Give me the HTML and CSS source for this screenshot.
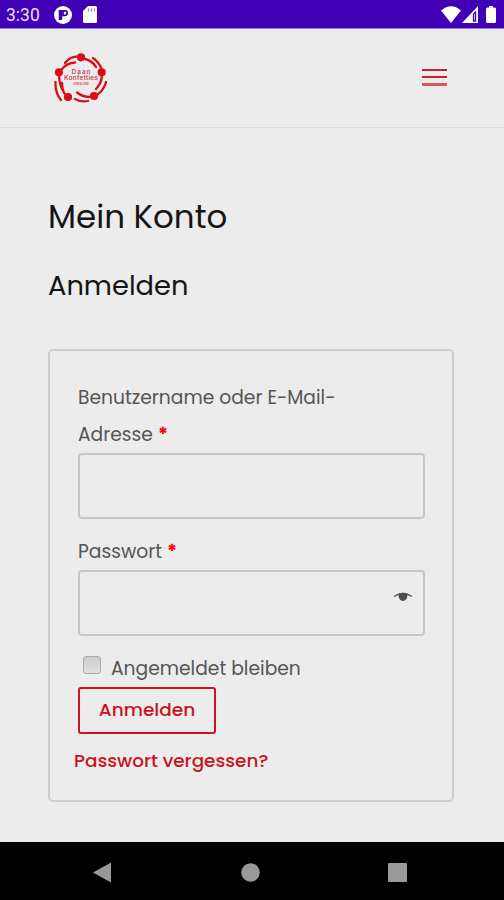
FILE: index.html
```html
<!DOCTYPE html>
<html lang="de">
<head>
<meta charset="utf-8">
<title>Mein Konto</title>
<link rel="stylesheet" href="styles.css">
</head>
<body>
<div class="status">
  <span class="time">3:30</span>
  <svg class="status-app" width="18" height="18" viewBox="0 0 18 18"><circle cx="9" cy="9" r="9" fill="#fff"/><path d="M6.500 4v10" fill="none" stroke="#4000b5" stroke-width="3.500"/><path d="M9 4.900h2a2.200 2.200 0 0 1 0 4.400H9z" fill="none" stroke="#4000b5" stroke-width="1.800"/></svg>
  <svg class="status-sd" width="14" height="17" viewBox="0 0 14 17"><path d="M5 0h7.500Q14 0 14 1.500v14Q14 17 12.500 17h-11Q0 17 0 15.500V5z" fill="#fff"/><path d="M5.500 2.500v3M8.500 2.500v3M11.500 2.500v3" stroke="#9a7ad8" stroke-width="1.300"/></svg>
  <svg class="status-wifi" width="20" height="17" viewBox="0 0 20 17"><path d="M0 4.500Q10-4 20 4.500L10 17z" fill="#fff"/></svg>
  <svg class="status-cell" width="16" height="17" viewBox="0 0 16 17"><path d="M0 17 16 0v17z" fill="#fff"/><path d="M11.500 8v7h2V6z" fill="none" stroke="#4000b5" stroke-width="1.300"/></svg>
  <svg class="status-battery" width="10" height="17" viewBox="0 0 10 17"><path d="M3 0h4v1.500h1.500Q10 1.500 10 3v12.500Q10 17 8.500 17h-7Q0 17 0 15.500V3Q0 1.500 1.500 1.500H3z" fill="#fff"/></svg>
</div>
<header class="header">
  <svg class="logo" width="54" height="52" viewBox="0 0 54 52">
    <g fill="#dc0d18"><circle cx="27" cy="5.300" r="4.100"/><circle cx="47.700" cy="20.300" r="4.100"/><circle cx="40" cy="44" r="4.100"/><circle cx="14" cy="45" r="4.100"/><circle cx="4.900" cy="20.300" r="4.100"/></g>
    <g fill="none" stroke="#dc0d18" stroke-width="2.300" stroke-linecap="round">
      <path d="M26 4.500Q16 4 11 11M21 10.500Q13 11 8 17M29 6.500Q38 8 42 15M39 6Q45 10 48 18M48 22Q48 31 42 37M52 30Q50 38 43 43M38 44.500Q30 46 23 40.500M34 49Q27 50.500 21 47M13 44Q6 38 5 24M7 48Q1 41 1.500 30M10 41Q8 37 8 31"/>
    </g>
    <g class="logo-text"><text x="27.500" y="21.500" font-size="6.500" letter-spacing="1">Daan</text><text x="27" y="28" font-size="6.500" textLength="34">Konfetties</text><text x="27" y="32.500" font-size="3" textLength="16">HAIR &amp; CARE</text></g>
  </svg>
  <div class="menu"><i></i><i></i><i></i></div>
</header>
<main class="content">
  <h1>Mein Konto</h1>
  <h2>Anmelden</h2>
  <form class="login">
    <label class="user-label">Benutzername oder E-Mail-<br>Adresse <b>*</b></label>
    <div class="field"></div>
    <label class="pass-label">Passwort <b>*</b></label>
    <div class="field pass">
      <svg width="20" height="10" viewBox="0 0 20 10"><path d="M1 4.500Q10-1.500 19 4.500" fill="none" stroke="#555" stroke-width="1.300"/><path d="M5.500 2Q10-.5 14.500 2 14.500 9 10 9T5.500 2z" fill="#4c4c4c"/></svg>
    </div>
    <div class="remember"><span class="check"></span>Angemeldet bleiben</div>
    <div class="button">Anmelden</div>
    <a class="lost">Passwort vergessen?</a>
  </form>
</main>
<nav class="nav">
  <svg width="19" height="21" viewBox="0 0 19 21"><path d="M0 10.500 18 .5v20z" fill="#999"/></svg>
  <svg width="19" height="19" viewBox="0 0 19 19"><circle cx="9.500" cy="9.500" r="9.300" fill="#999"/></svg>
  <svg width="19" height="19" viewBox="0 0 19 19"><rect width="19" height="19" rx="1" fill="#999"/></svg>
</nav>
</body>
</html>
```
FILE: styles.css
```css
* { box-sizing: border-box; }
body {
  margin: 0;
  height: 900px;
  display: flex;
  flex-direction: column;
  background: #ececec;
  color: #555;
  font: 18.7px/37px Poppins, Inter, sans-serif;
  white-space: nowrap;
}
svg { display: block; flex: none; }
.status {
  height: 29px;
  flex: none;
  display: flex;
  align-items: center;
  padding: 1px 8px 0 6px;
  background: #4000b5;
  border-bottom: 1px solid #9b80da;
}
.time {
  width: 48px;
  color: #e8defa;
  font: 17.5px/28px Roboto, sans-serif;
}
.status-sd { margin-left: 11px; }
.status-wifi { margin-left: auto; }
.status-cell { margin-left: 1px; }
.status-battery { margin-left: 8px; }
.header {
  height: 99px;
  flex: none;
  display: flex;
  justify-content: space-between;
  padding: 23px 57px 0 54px;
  border-bottom: 1px solid #dedede;
}
.logo-text {
  fill: #c8303a;
  font-family: Inter, sans-serif;
  font-weight: 500;
  text-anchor: middle;
}
.menu {
  width: 25px;
  padding-top: 17px;
  display: flex;
  flex-direction: column;
  gap: 5px;
}
.menu i { height: 2px; background: #c4232b; }
.menu i:nth-child(3) { height: 3px; background: #d25b60; }
.content {
  flex: 1;
  padding: 69px 50px 0 48px;
}
h1, h2 { margin: 0; color: #151515; font-weight: 400; }
h1 { font-size: 32.5px; line-height: 40px; }
h2 { margin-top: 31px; font-size: 27.3px; line-height: 36px; }
.login {
  height: 453px;
  margin-top: 45px;
  padding: 28px 27px 0 28px;
  border: 2px solid #cdcdcd;
  border-radius: 5px;
}
.user-label, .pass-label { display: block; }
b { color: #f00; font-weight: 700; }
.field {
  height: 66px;
  border: 2px solid #c6c6c6;
  border-radius: 4px;
}
.pass-label { margin-top: 14px; }
.pass {
  display: flex;
  justify-content: flex-end;
  padding: 20px 10px 0 0;
}
.remember {
  height: 37px;
  margin-top: 14px;
  padding-left: 5px;
  display: flex;
}
.check {
  width: 18px;
  height: 18px;
  margin: 6px 10px 0 0;
  border: 1px solid #adadad;
  border-radius: 3px;
  background: linear-gradient(#cdcdcd, #dedede);
}
.button {
  width: 138px;
  height: 47px;
  border: 2px solid #cc1420;
  border-radius: 3px;
  color: #c9141f;
  font-size: 18.5px;
  font-weight: 500;
  line-height: 42px;
  text-align: center;
}
.lost {
  display: block;
  margin: 8px 0 0 -4px;
  color: #c9141f;
  font-size: 18.4px;
  font-weight: 500;
}
.nav {
  height: 58px;
  flex: none;
  display: flex;
  justify-content: space-between;
  align-items: center;
  padding: 2px 97px 0 93px;
  background: #000;
}
```
